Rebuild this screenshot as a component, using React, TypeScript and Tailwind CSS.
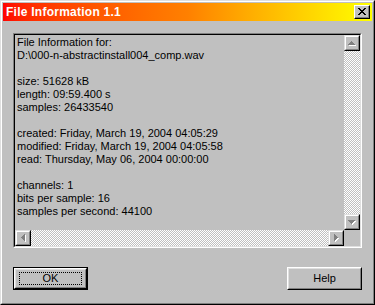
import React from 'react';

type Dir = 'up' | 'down' | 'left' | 'right';

// pixel rows of a 7x4 triangle pointing up
const arrowRects: Record<Dir, string> = {
  up: 'M3 0h1v1H3z M2 1h3v1H2z M1 2h5v1H1z M0 3h7v1H0z',
  down: 'M0 0h7v1H0z M1 1h5v1H1z M2 2h3v1H2z M3 3h1v1H3z',
  left: 'M3 0h1v7H3z M2 1h1v5H2z M1 2h1v3H1z M0 3h1v1H0z',
  right: 'M0 0h1v7H0z M1 1h1v5H1z M2 2h1v3H2z M3 3h1v1H3z',
};

const ScrollButton: React.FC<{ dir: Dir }> = ({ dir }) => {
  const vertical = dir === 'up' || dir === 'down';
  const w = vertical ? 8 : 5;
  const h = vertical ? 5 : 8;
  return (
    <div className="w-4 h-4 border-t border-l border-t-[#dfdfdf] border-l-[#dfdfdf] border-r border-b border-r-black border-b-black">
      <div className="w-full h-full bg-[#c0c0c0] border-t border-l border-t-white border-l-white border-r border-b border-r-[#808080] border-b-[#808080] flex items-center justify-center">
        <svg width={w} height={h} viewBox={`0 0 ${w} ${h}`} shapeRendering="crispEdges">
          <path d={arrowRects[dir]} fill="#ffffff" transform="translate(1 1)" />
          <path d={arrowRects[dir]} fill="#808080" />
        </svg>
      </div>
    </div>
  );
};

const track =
  'bg-[image:repeating-conic-gradient(#ffffff_0%_25%,#c0c0c0_0%_50%)] bg-[length:2px_2px]';

const lines = [
  'File Information for:',
  'D:\\000-n-abstractinstall004_comp.wav',
  '',
  'size: 51628 kB',
  'length: 09:59.400 s',
  'samples: 26433540',
  '',
  'created: Friday, March 19, 2004 04:05:29',
  'modified: Friday, March 19, 2004 04:05:58',
  'read: Thursday, May 06, 2004 00:00:00',
  '',
  'channels: 1',
  'bits per sample: 16',
  'samples per second: 44100',
];

const Button: React.FC<{ label: string; isDefault?: boolean }> = ({ label, isDefault }) => {
  const inner = (
    <div className="w-full h-full border-t border-l border-t-white border-l-white border-r border-b border-r-black border-b-black">
      <div className="w-full h-full border-t border-l border-t-[#dfdfdf] border-l-[#dfdfdf] border-r border-b border-r-[#808080] border-b-[#808080] flex items-center justify-center">
        {isDefault ? (
          <div className="w-[63px] h-[13px] border border-dotted border-black flex items-center justify-center">
            {label}
          </div>
        ) : (
          label
        )}
      </div>
    </div>
  );
  return isDefault ? (
    <div className="w-[75px] h-[23px] border border-black">{inner}</div>
  ) : (
    <div className="w-[75px] h-[23px]">{inner}</div>
  );
};

export default function App() {
  return (
    <div className="w-[375px] h-[305px] bg-[#c0c0c0] font-['Liberation_Sans',Arial,sans-serif] text-[11px] text-black leading-[13px]">
      <div className="w-full h-full border-t border-l border-t-[#dfdfdf] border-l-[#dfdfdf] border-r border-b border-r-black border-b-black">
        <div className="w-full h-full border-t border-l border-t-white border-l-white border-r border-b border-r-[#808080] border-b-[#808080] p-px flex flex-col">
          {/* title bar */}
          <div className="h-[18px] flex items-center justify-between pl-[3px] pr-[2px] bg-gradient-to-r from-[#ff0000] via-[#ff8000] to-[#ffff00]">
            <span className="text-white font-bold text-[12px] leading-[14px] tracking-[0.25px]">File Information 1.1</span>
            <div className="w-4 h-[14px] border-t border-l border-t-white border-l-white border-r border-b border-r-black border-b-black">
              <div className="w-full h-full bg-[#c0c0c0] border-r border-b border-r-[#808080] border-b-[#808080] flex items-center justify-center">
                <svg width="8" height="7" viewBox="0 0 8 7" shapeRendering="crispEdges" className="ml-px">
                  <path
                    d="M0 0h2v1H0z M6 0h2v1H6z M1 1h2v1H1z M5 1h2v1H5z M2 2h4v1H2z M3 3h2v1H3z M2 4h4v1H2z M1 5h2v1H1z M5 5h2v1H5z M0 6h2v1H0z M6 6h2v1H6z"
                    fill="#000"
                  />
                </svg>
              </div>
            </div>
          </div>

          <div className="flex-1 flex flex-col px-[10px] pt-[12px]">
            {/* info panel */}
            <div className="h-[215px] border-t border-l border-t-[#808080] border-l-[#808080] border-r border-b border-r-white border-b-white">
              <div className="w-full h-full border-t border-l border-t-black border-l-black border-r border-b border-r-[#dfdfdf] border-b-[#dfdfdf] grid grid-cols-[1fr_16px] grid-rows-[1fr_16px]">
                <div className="pl-[2px] pt-px overflow-hidden whitespace-pre">
                  {lines.map((l, i) => (
                    <div key={i} className="h-[13px]">
                      {l}
                    </div>
                  ))}
                </div>
                <div className={`flex flex-col justify-between ${track}`}>
                  <ScrollButton dir="up" />
                  <ScrollButton dir="down" />
                </div>
                <div className={`flex justify-between ${track}`}>
                  <ScrollButton dir="left" />
                  <ScrollButton dir="right" />
                </div>
                <div className="bg-[#c0c0c0]" />
              </div>
            </div>

            <div className="mt-[19px] flex justify-between">
              <Button label="OK" isDefault />
              <Button label="Help" />
            </div>
          </div>
        </div>
      </div>
    </div>
  );
}
